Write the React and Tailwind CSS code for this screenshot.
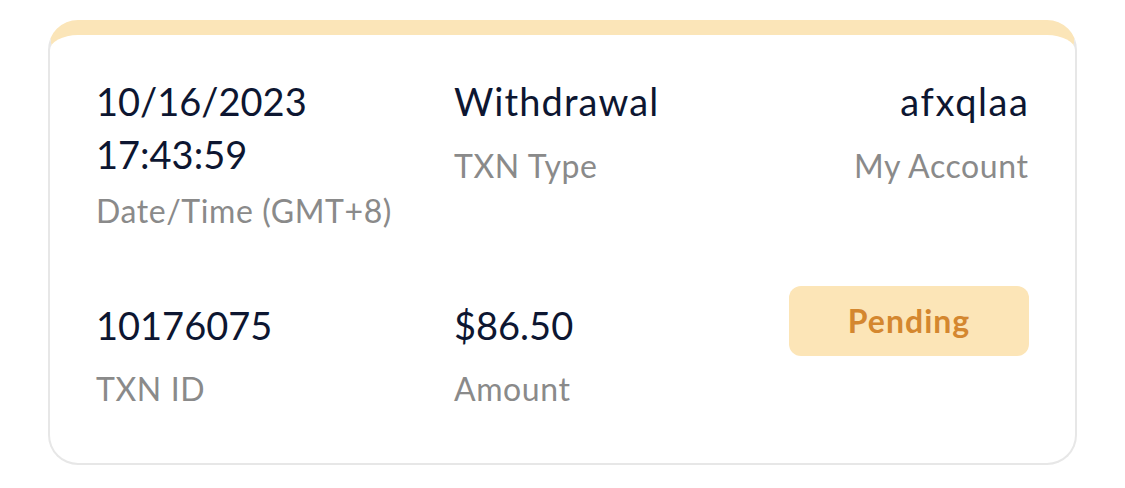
export default function App() {
  const font = { fontFamily: 'Lato, "Noto Sans", sans-serif' };
  const val = "text-[38px] leading-[53px] text-[#0d1631]";
  const lab = "text-[32px] leading-[44px] text-[#8a8a8a] tracking-[0.6px]";
  return (
    <div className="w-[1125px] h-[488px] bg-white pt-[20px] px-[48px]" style={font}>
      <div className="rounded-[30px] border-2 border-[#e7e7e7] border-t-[15px] border-t-[#fbe5b8] bg-white pl-[46px] pr-[47px] pt-[40px] pb-[52px]">
        <div className="grid grid-cols-[358px_1fr_auto]">
          <div className="flex flex-col">
            <div className={val}>10/16/2023<br />17:43:59</div>
            <div className={`${lab} mt-[8px]`}>Date/Time (GMT+8)</div>
          </div>
          <div className="flex flex-col">
            <div className={`${val} tracking-[1.1px]`}>Withdrawal</div>
            <div className={`${lab} mt-[16px]`}>TXN Type</div>
          </div>
          <div className="flex flex-col items-end">
            <div className={`${val} tracking-[1.6px] -mr-[1.6px]`}>afxqlaa</div>
            <div className={`${lab} mt-[16px] -mr-[0.6px]`}>My Account</div>
          </div>

          <div className="flex flex-col mt-[66px]">
            <div className={val}>10176075</div>
            <div className={`${lab} mt-[15px]`}>TXN ID</div>
          </div>
          <div className="flex flex-col mt-[66px]">
            <div className={val}>$86.50</div>
            <div className={`${lab} mt-[15px]`}>Amount</div>
          </div>
          <div className="flex flex-col items-end mt-[53px]">
            <div className="w-[240px] h-[70px] rounded-[12px] bg-[#fce5b7] flex items-center justify-center text-[32px] font-bold tracking-[1px] text-[#d4872f] -mr-[1px]">
              Pending
            </div>
          </div>
        </div>
      </div>
    </div>
  );
}
